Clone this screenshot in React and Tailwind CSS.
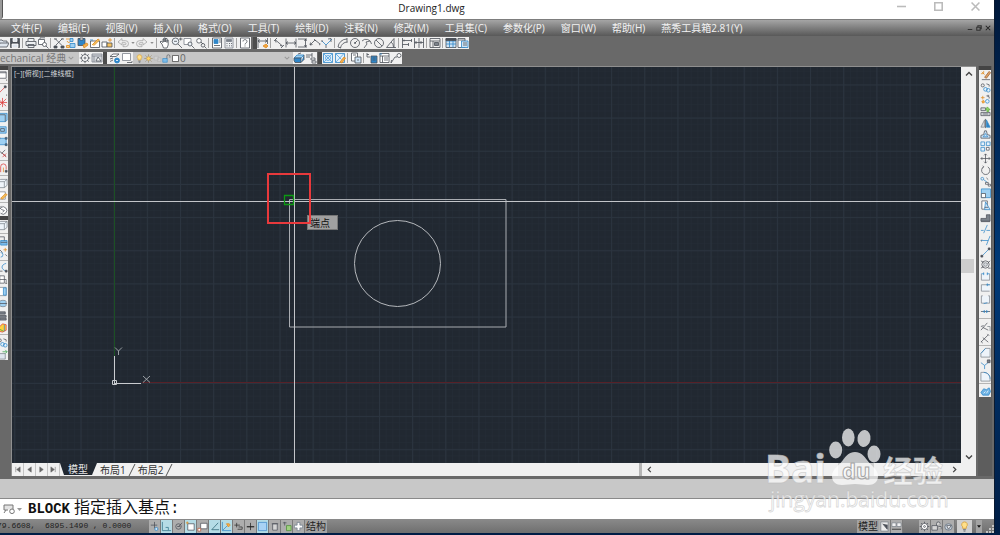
import React from "react";

const K = "#4b5058";
const B = "#2f86c8";
const L = "#9fd0f2";
const O = "#e08a1e";
const G = "#7c828a";
const R = "#dd3b3b";
const N = "none";

// Every icon is a list of [path, stroke, fill] drawn on a 12 x 12 grid.
const ICONS = {
  open: [["M1 10V3h4l1 1h4v2M1 10l2-4h9l-2 4z", K, "#dfe6ee"]],
  save: [["M1.500 1.500h9v9h-9z", K, K], ["M4 1.500h4v3H4zM3 7h6v3.500H3z", "#fff", "#dfe6ee"]],
  print: [["M3 4V1.500h6V4M1 4.500h10v4H1zM3 7.500h6v3H3z", K, "#eef0f2"]],
  preview: [["M1.500 4V2.500h6v5h-6zM3 2V.800h5", K, "#fff"], ["M7.500 5.500a2 2 0 1 1 0 4 2 2 0 0 1 0-4M9 9l2.500 2.500", K, "#fff"]],
  cut: [["M2 1.500l7 7M9.500 1.500l-7 7M1 2h3M8 2h3", K, N], ["M1 9h3v2H1zM8 9h3v2H8z", K, K]],
  copy: [["M1 2h4M2 4a2 2 0 0 0 3 1", O, N], ["M5 1.500h3v3H5zM5 6.500h5v4H5z", B, L], ["M1.500 8.500h3v2h-3z", O, "#f7d08a"]],
  paste: [["M1 1.500h7v7H1z", K, B], ["M3 1h3v2H3z", K, "#fff"], ["M6 8l4-2 1 2-4 3z", O, "#f3b04f"]],
  match: [["M1.500 4h9v6.500h-9z", K, "#fff"], ["M3 8l6-6 1.500 1L5 8.500", O, "#f3c05f"], ["M1 3h3", B, N]],
  block: [["M1 5h5v5H1z", K, "#fff"], ["M6 6h5v4H6z", K, "#f3c05f"], ["M7 3h4M9 1v4", O, N]],
  undo: [["M1 5l4-3.500v2.200h3.500a2.300 2.300 0 0 1 0 6H6v-2h2a.600.600 0 0 0 0-2H5V8z", "#a6a6a6", "#eee"]],
  redo: [["M11 5L7 1.500v2.200H3.500a2.300 2.300 0 0 0 0 6H6v-2H4a.600.600 0 0 1 0-2h3V8z", "#a6a6a6", "#eee"]],
  hand: [["M3 7L1 5l1-1 2 1.500V2h1v3V1h1.300v4V1.500H8v4V3h1.200v5L8 11H4.500z", K, "#fff"]],
  zoom: [["M4.500 1a3.300 3.300 0 1 1 0 6.600 3.300 3.300 0 0 1 0-6.600M7 7l4 4", K, "#eef4fa"], ["M3 4.300h3M8 2h3.500M9.700.500v3", K, N]],
  zoomWin: [["M1 1.500h7v6H1z", G, "#fff"], ["M7 5a2 2 0 1 1 0 4 2 2 0 0 1 0-4M8.500 8.500L11.500 11.500", K, "#eef4fa"]],
  zoomPrev: [["M4 1.500a2.300 2.300 0 1 1 0 4.600 2.300 2.300 0 0 1 0-4.600M6 5l2 2", K, "#fff"], ["M8 6.500a1.800 1.800 0 1 1 0 3.600 1.800 1.800 0 0 1 0-3.600M9.500 9.500l2 2", K, N]],
  props: [["M1.500 1h9v10h-9z", K, "#fff"], ["M3 2.500h4v4H3z", B, B], ["M8 3h2M8 5h2M3 8.500h6", K, N]],
  calc: [["M2 1h8v10H2z", G, "#eef0f2"], ["M3.500 2.500h5v2h-5z", G, G], ["M3.500 6.500h1M6 6.500h1M8 6.500h1M3.500 8.800h1M6 8.800h1M8 8.800h1", K, N]],
  help: [["M1.500 1h9v10h-9z", K, "#fff"], ["M4 4.500c0-2.500 4-2.500 4 0 0 1.500-2 1.500-2 3M6 8.500v1", K, N]],
  dimSmart: [["M1 1v10M10.500 1v6M1 4h9M3 2.500L1 4l2 1.500M8 2.500L10 4 8 5.500", K, N], ["M6 9l3-2 2 2-2 2z", O, "#f3a63f"]],
  dimAlign: [["M1 4l3-3M8 11l3-3M2.500 3l7 6M2.500 3l.5 2.500M9.500 9L7 8.500", K, N]],
  dimLin: [["M1 1.500v9M11 1.500v9M1 6h10M3 4.500L1 6l2 1.500M9 4.500L11 6 9 7.500", K, N]],
  dimBase: [["M1 2h9M1 10h9M8.500 2v8M7.500 4l1-2 1 2M7.500 8l1 2 1-2", K, N]],
  dimAng: [["M1 8l5-5 5 4M1 8l2.500-.5M1 8l.5-2.500", K, N], ["M5 2l2 2M10 8l1.500-1", K, N]],
  dimOrd: [["M1 4l4 4 6-6", B, N], ["M7 2l3-.5V5M5 8v3M1 3v2", K, N]],
  dimArc: [["M1 10a9 9 0 0 1 9-8M3.500 11a7 7 0 0 1 7-6M10 1v4.500M1 10l3 1", K, N]],
  dimRad: [["M6 1.500a4.500 4.500 0 1 1 0 9 4.500 4.500 0 0 1 0-9M6 6L8.500 3.500M6 5v2M5 6h2", K, N]],
  dimJog: [["M1 4a5.500 5.500 0 0 1 9.500 3M3 11l3-4-1-2 4-1", K, N]],
  dimDia: [["M6 1.500a4.500 4.500 0 1 1 0 9 4.500 4.500 0 0 1 0-9M3 3l6 6", K, N]],
  dimAngle: [["M9 1.500L1.500 10.500H11M6 5a6 6 0 0 1 2.500 5M9 1.500v9", K, N]],
  dimCont: [["M1.500 1v10M1.500 3.500h9M1.500 7.500h6M7.500 6v3M10.500 2v3M3 2.500v2", K, N]],
  dimQuick: [["M1.500 1v10M6 1v10M10.500 1v10M1.500 5.500h9M3 4v3M8 4v3", K, N]],
  tol: [["M1 1.500h10v9H1zM1 4h10M4 4v6.500", K, N], ["M5.500 5.500h4v3h-4z", K, G]],
  table: [["M1 1.500h10v9H1z", K, "#cfe4f6"], ["M1 4h10M1 7h10M4.500 1.500v9M8 1.500v9", B, N], ["M1 1.500h10v2H1z", K, K]],
  calcTab: [["M1 1.500h7v9H1z", K, "#fff"], ["M4.500 4h6.500v6.500H4.500z", B, "#cfe4f6"], ["M6 6h4M6 8h4M1 3h7", K, N]],
  gear: [["M6 2.500a3.500 3.500 0 1 1 0 7 3.500 3.500 0 0 1 0-7M6 .800v2M6 9.200v2M.800 6h2M9.200 6h2M2.300 2.300l1.500 1.500M8.200 8.200l1.500 1.500M9.700 2.300L8.200 3.800M3.800 8.200L2.300 9.700", K, "#fff"], ["M6 5a1 1 0 1 1 0 2 1 1 0 0 1 0-2", K, "#fff"]],
  space: [["M1 2h10v8H1zM1 4h10M3 4v6", G, "#d7dade"], ["M5 9l2-4 3 4z", K, "#fff"]],
  layers: [["M1 4.500L4 2h6L7 4.500zM1 7l3-1M1 9.500L4 8", K, "#fff"], ["M8 6a2.500 2.500 0 1 1 0 5 2.500 2.500 0 0 1 0-5", B, B], ["M7 8.500h2", "#fff", N]],
  layerState: [["M1.500 1.500h8v7h-8z", G, "#fff"], ["M6 10.500h5V9", K, N]],
  bulb: [["M6 1a3 3 0 0 1 2 5.300V8H4V6.300A3 3 0 0 1 6 1", "#d79a2b", "#ffe08a"], ["M4.500 9.500h3M5 11h2", K, N]],
  sun: [["M6 3.500a2.500 2.500 0 1 1 0 5 2.500 2.500 0 0 1 0-5", "#b58a3a", "#ffd66b"], ["M6 .500v2M6 9.500v2M.500 6h2M9.500 6h2M2 2l1.500 1.500M8.500 8.500L10 10M10 2L8.500 3.500M2 10l1.500-1.500", "#8b7a4c", N]],
  ghost: [["M1.500 3h6v5h-6zM6 5h4.500v5H6z", "#b4b4b4", "#cfcfcf"]],
  lock: [["M1 6h6v5H1z", B, "#7dbcea"], ["M6.500 6V3a2 2 0 0 1 4 0v2", K, N]],
  square: [["M2 2h8v8H2z", "#222", "#fff"]],
  layPrev: [["M1 6l3-3h7L8 6z", B, L], ["M1 8.500V6h7v4.500H2zM8 10.500l3-3V3", K, B], ["M5 2l3-1", K, N]],
  layIso: [["M1 3h6M1 5h4M7 1v4", K, N], ["M6 6h4v2H6zM7 9h4v2H7z", K, "#fff"]],
  grp: [["M1.500 1.500h9v9h-9z", B, "#e4f1fb"], ["M1.500 1.500l9 9M10.500 1.500l-9 9M6 3.500a2.500 2.500 0 1 1 0 5 2.500 2.500 0 0 1 0-5", "#4f9fdd", N]],
  grpEdit: [["M1.500 1.500h9v9h-9z", B, "#e4f1fb"], ["M1.500 1.500l6 6M10 1.500l-8.500 9", "#4f9fdd", N], ["M6 10l4-5 1.500 1-3.500 5z", O, "#f3b04f"]],
  insert: [["M1.500 1h6v8h-6z", K, "#fff"], ["M5 5h6v6H5z", K, "#cfe4f6"], ["M3 3h3M7 8h2", K, N]],
  attr: [["M5 4h6v7H5z", K, B], ["M1 1v4h3M1 2.500h2M6.500 6h3M6.500 8h3", K, N]],
  list: [["M2 1.500h9v9H2z", K, "#fff"], ["M2 4h9M4.500 4v6.500M6 6h4M6 8h4", K, N], ["M1 2h3", B, N]],
  leader: [["M1 11l4-6h2", K, N], ["M9 1.500a2 2 0 1 1 0 4 2 2 0 0 1 0-4", K, "#fff"], ["M1 11l.5-3", K, N]],
  erase: [["M2 2l3 3M1 4h3M4 1v3", O, N], ["M5 8l5-6.500L11.500 3 7 9z", "#9a5a2a", "#e0a468"], ["M2 10.500h9", K, N]],
  copyObj: [["M3 2a1.700 1.700 0 1 1 0 3.400A1.700 1.700 0 0 1 3 2M7 2l3 1v2", K, N], ["M6 6a2 2 0 1 1 0 4 2 2 0 0 1 0-4M9 7a2 2 0 1 1 0 4 2 2 0 0 1 0-4", B, "#e4f1fb"]],
  copyOr: [["M1 4h4M3 2v4", O, N], ["M7 2l3 1v2M8 1.500h2", K, N], ["M2 8l2-1 1 2-2 1z", O, "#f3b04f"], ["M8 6a2 2 0 1 1 0 4 2 2 0 0 1 0-4", B, "#e4f1fb"]],
  scaleList: [["M1 2h5v3H1zM1 7h10v3.500H1z", K, "#d7dade"], ["M8 1l3 3H9.500v2h-2V4H6z", "#58a838", "#8fd16b"], ["M3 8.700h6", K, N]],
  mirror: [["M5 2v8H1z", G, "#d7dade"], ["M7 2v8h4z", B, B], ["M6 1v10", K, N]],
  offset: [["M1 10V7l3-1 1-4h2l1 4 3 1v3z", K, "#cfe4f6"], ["M3.500 8.500h5L6 5z", B, N]],
  array: [["M1 1h4v4H1zM7 1h4v4H7zM1 7h4v4H1z", B, "#e4f1fb"], ["M7 7h3v3H7z", K, "#fff"]],
  move: [["M6 1v10M1 6h10M4.500 2.500L6 1l1.500 1.500M4.500 9.500L6 11l1.500-1.500M2.500 4.500L1 6l1.500 1.500M9.500 4.500L11 6 9.500 7.500", K, N]],
  rotate: [["M4 2a4.500 4.500 0 1 0 4.500 0M4 2L3 .800M4 2L2.500 3.500", K, N]],
  stretchObj: [["M2.500 1.500a1.500 1.500 0 1 1 0 3 1.500 1.500 0 0 1 0-3M4 4l4 3", B, N], ["M7 2l2 2M6 7h3v2H6zM9 9h2.500v2H9z", K, "#fff"]],
  scale: [["M1.500 1h10v9.500H1.500z", B, L], ["M1.500 6h4.500v4.500H1.500z", K, "#fff"]],
  stretch: [["M2 1h6v9H2z", K, "#fff"], ["M6 2l5 8.500H5z", B, "#cfe4f6"], ["M5 8h4", K, N]],
  lengthen: [["M1 7h6V3h4v7H1z", K, G], ["M1 10.500h10", K, N]],
  trim: [["M1 7h3M7 7h4", B, N], ["M4 10l4-9", B, N]],
  extend: [["M1 6h8", B, N], ["M7 11l4-10", B, N], ["M2 5l-1 1 1 1", K, N]],
  breakPt: [["M2 10l8-8", B, N], ["M1 9h2v2H1zM9 1h2v2H9z", K, K]],
  hatch: [["M6 2a4 4 0 1 1 0 8 4 4 0 0 1 0-8M1 2l3 2M11 2L8 5M1 10l3-2M9 10h2.500", K, N], ["M6 4a2 2 0 1 1 0 4 2 2 0 0 1 0-4", G, "#d7dade"]],
  brk: [["M1.500 3v7h9V3", G, "#eef4fa"], ["M1.500 3h3M7.500 3h3", B, N], ["M4 1.500v3M8 1.500v3", B, N]],
  brk2: [["M10.500 3h-9v7h9", G, "#eef4fa"], ["M7 3h4M8 1.500v3", B, N]],
  join: [["M3 2H1.500v8h9V2H9", G, "#eef4fa"], ["M4 10.500l4-1", B, N]],
  merge: [["M1 6h10", K, N], ["M5 4.500L3.500 6 5 7.500M7 4.500L8.500 6 7 7.500", B, B]],
  angA: [["M1 10l7-8M3 7l6 3M1 6l3-1", K, N], ["M8 6h3v5", G, N]],
  angB: [["M1 10l8-8M3 5l6 5M1 9l2 2M8 1l2 2", K, N]],
  chamfer: [["M1 11V7l5-5.500h5V11z", G, "#eef4fa"], ["M1 7l5-5.500", B, N]],
  ext2: [["M1 4l4 3M5 7l5-4M5 7v4", B, N], ["M8 1h3v3H8z", K, G]],
  fillet: [["M1 11V1.500h3c4 0 7 3 7 7V11z", G, "#eef4fa"], ["M4 1.500c4 0 7 3 7 7", B, N]],
  explode: [["M1 7l3-4 3 1 3-2 1.500 4-2 4H3z", B, "#6fb3e4"], ["M4 8l2-2M7 8l2-3", "#fff", N]],
  panel: [["M0 2h10v7H0z", K, "#fff"], ["M0 3h10", K, N], ["M10 11h1", "#111", N]],
  line: [["M2 9l7-7", R, N], ["M8 1h2v2H8z", K, K], ["M10 11h1", "#111", N]],
  star: [["M1 2l9 8M10 2L2 10M6 1v10M1 6h10", R, N]],
  sheet: [["M1 3l2-1.500h8V9L9 10.500H1z", B, L], ["M1 3h8v7.500", K, N]],
  sheet2: [["M1 3h9v7H1z", B, L], ["M4 5h4v3H4z", K, N]],
  frame: [["M2 2.500h8v7H2z", B, L], ["M1 1.500h2v2H1zM9 1.500h2v2H9zM9 8.500h2v2H9z", K, B]],
  node: [["M2 3l8 6", K, N], ["M6 6l4 4M10 6l-4 4", R, N], ["M9 2l-4 4", K, N]],
  arch: [["M4 10V4a3 3 0 0 1 6 0v3", R, N], ["M7 10V5", O, N], ["M9 8h2v2H9z", K, K]],
  cube: [["M1 4l3-2.500h7V8L8 10.500H1z", G, "#eef4fa"], ["M1 4h7v6.500M8 4l3-2.500", G, N]],
  pencil: [["M1 2h8v8H1z", G, "#fff"], ["M4 9l5-5 2 1-5 5z", O, "#f3c05f"]],
  spin: [["M4 3a4 4 0 1 1 0 6M5 5l3 1-2 2M5 1L3 3l2 2", K, "#fff"]],
  db: [["M4 6h7v5H4z", B, "#7dbcea"], ["M3 2h5v4M4 8h7", K, N]],
  spark: [["M4 6a2.500 2.500 0 1 1 0 5", B, N], ["M7 3h4M9 1v4", O, N], ["M3 3l3 3M9 8l2 2", K, N]],
  curve: [["M10 1.500C4 3 4 8 10 10", B, N], ["M2 2v8h4", K, N], ["M9 9h2v2H9z", K, K]],
  mesh: [["M3 2h5v8H3zM3 6h7v3", K, "#fff"], ["M9 10h2", "#111", N]],
  half: [["M2 1.500h8v9H2z", G, "#fff"], ["M7 2h3v8H7z", B, L]],
  drum: [["M3 4a3.500 1.500 0 1 1 7 0v4a3.500 1.500 0 1 1-7 0z", G, L], ["M2 6h9", K, N]],
  stack: [["M2 2h7v2.500H2zM2 6h8v2H2zM3 9h7v2H3z", K, G]],
  color: [["M2 6l4-4 4 1v6l-4 2-4-1z", R, "#ffd13b"], ["M8 3v7", B, N], ["M3 8l4 2", "#37a34a", N]],
  green: [["M2 5h7v6H2z", G, "#dfe6ee"], ["M6 3h5M9 1l2 2-2 2", "#37a34a", N]],
  snapInfer: [["M6 1v7M2 4.500h7", K, N], ["M8 7a1.700 1.700 0 1 1 0 3.400A1.700 1.700 0 0 1 8 7", B, "#cfe4f6"]],
  corner: [["M1.500 1v9.500H11", "#2d7186", N], ["M5 7h3v3", "#2d7186", N]],
  polar: [["M6 3a3 3 0 1 1 0 6 3 3 0 0 1 0-6M6 6l4-4M4.500 6H8", K, N]],
  osnap: [["M3 3h7v7H3z", K, "#fff"], ["M1 2h3M2.500.500v3", O, N]],
  osnap3: [["M4 2.500h7v6H4z", K, "#fff"], ["M1 8h3v3H1z", "#b5563a", "#fff"]],
  otrack: [["M10 2L3 9.500h8", "#26606f", N]],
  ducs: [["M1.500 1v9.500H11M2 10l5-5", B, N], ["M6 3h3l1 1.500-2 2z", O, "#f3b04f"]],
  dyn: [["M4 2v5M1.500 4.500h6M5 9h5V6.500H6", "#2c2c2c", N]],
  lwt: [["M6 2v8M2 6h8", "#222", N], ["M2 6.500h8", "#222", N]],
  tpy: [["M1.500 1.500h9v9h-9z", "#3f86c8", "#a8d2f4"]],
  qp: [["M4 3h5v7H4zM3 3h7", K, "#d5d5d5"]],
  sc: [["M2 2h4M4 1v4", K, N], ["M6 5h5v5.500H6z", "#4b8c36", "#9fd17f"]],
  plus: [["M4.500 1.500h3v3h3v3h-3v3h-3v-3h-3v-3h3z", "#6f7b8a", "#fff"]],
  paper: [["M2 1h8v10H2z", G, "#ececec"], ["M4 3l5 6V4", K, K]],
  views: [["M1 2h4.500v4H1zM6.500 2H11v4H6.500z", G, "#f2f2f2"], ["M1 9h10", "#222", N]],
  tray: [["M1 5h6v5H1zM6 5V3a2 2 0 0 1 4 0M8 6h3v3", K, "#d5d5d5"]],
  disc: [["M6 3a4 3.500 0 1 1 0 7 4 3.500 0 0 1 0-7", "#5f6b78", "#c7d0da"], ["M4 5h5L6 9z", "#4b5058", "#eef0f2"]],
};

function Icon({ n, cls = "size-3" }) {
  return (
    <svg viewBox="0 0 12 12" className={`${cls} shrink-0`} aria-hidden="true">
      {ICONS[n].map(([d, s, f], i) => (
        <path key={i} d={d} stroke={s} fill={f} strokeWidth=".8" />
      ))}
    </svg>
  );
}

function Tool({ n }) {
  return (
    <button type="button" aria-label={n} className="flex h-full w-3 shrink-0 items-center justify-center">
      <Icon n={n} />
    </button>
  );
}

const Sep = () => <span className="mr-[2px] ml-px h-[10px] w-px shrink-0 self-center bg-[#a3a3a3]" />;
const Handle = () => <span className="h-full w-1 shrink-0 bg-[#4d4d4d]" />;
const More = () => (
  <button type="button" aria-label="more" className="flex w-[7px] shrink-0 items-center justify-center">
    <svg viewBox="0 0 5 3" className="h-[2px] w-1"><path d="M0 0h5L2.500 3z" fill="#8d8d8d" /></svg>
  </button>
);

function Tools({ list }) {
  return list.split(" ").map((n, i) => {
    if (n === "|") return <Sep key={i} />;
    if (n === "v") return <More key={i} />;
    return <Tool key={i} n={n} />;
  });
}

function Column({ list, cls }) {
  return (
    <div className={`flex flex-col items-end bg-[#f0f0f0] ${cls}`}>
      {list.split(" ").map((n, i) =>
        n === "|" ? (
          <span key={i} className="my-px h-px w-full shrink-0 bg-[#b5b5b5]" />
        ) : (
          <button key={i} type="button" aria-label={n} className="flex min-h-0 w-3 flex-1 items-center justify-center">
            <Icon n={n} cls="size-[11px]" />
          </button>
        )
      )}
    </div>
  );
}

function Chevron({ d, cls = "size-2", stroke = "#444" }) {
  return (
    <svg viewBox="0 0 8 8" className={`${cls} shrink-0`} aria-hidden="true">
      <path d={d} fill="none" stroke={stroke} strokeWidth="1.400" />
    </svg>
  );
}

const MENUS = ["文件(F)", "编辑(E)", "视图(V)", "插入(I)", "格式(O)", "工具(T)", "绘制(D)", "注释(N)", "修改(M)", "工具集(C)", "参数化(P)", "窗口(W)", "帮助(H)", "燕秀工具箱2.81(Y)"];

function Drawing() {
  return (
    <svg className="absolute inset-0 h-full w-full" aria-label="drawing">
      <defs>
        <pattern id="minor" x="2.300" y="17" width="6.632" height="6.632" patternUnits="userSpaceOnUse">
          <path d="M0 0H6.632M0 0V6.632" stroke="#252d37" strokeWidth="1" />
        </pattern>
        <pattern id="major" x="2.200" y="17.500" width="33.160" height="33.160" patternUnits="userSpaceOnUse">
          <path d="M.5 0V33.160M0 .5H33.160" stroke="#2b343f" strokeWidth="1" />
        </pattern>
      </defs>
      <rect width="100%" height="100%" fill="url(#minor)" />
      <rect width="100%" height="100%" fill="url(#major)" />
      <g fill="none" transform="translate(-12 -67)">
        <path d="M114.500 60V356" stroke="#1c5024" />
        <path d="M142 382.500H3000" stroke="#572128" />
        <path d="M114.500 356V383M114 383.500H141" stroke="#c9ccd0" />
        <path d="M112.500 380.500h4v4h-4z" stroke="#c9ccd0" />
        <path d="M143 376l7 6.500M150 376l-7 6.500M115 347.500l3.500 3.500 3.500-3.500M118.500 351v4" stroke="#a7abb0" strokeWidth=".9" />
        <path d="M289.500 199.500H506V327H289.500z" stroke="#a9acb1" />
        <circle cx="397.500" cy="263.500" r="43" stroke="#b4b7bb" />
        <path d="M294.500 0V3000M0 201.500H3000" stroke="#c3c5c9" />
        <path d="M284.500 195.500h9v9h-9z" stroke="#0c9a12" strokeWidth="1.300" />
      </g>
    </svg>
  );
}

function Watermark() {
  return (
    <svg viewBox="0 0 190 90" className="pointer-events-none absolute right-[43px] bottom-[18px] h-[90px] w-[190px]">
      <g fill="#fff" fillOpacity=".72">
        <ellipse cx="74.700" cy="25" rx="6.500" ry="8.500" />
        <ellipse cx="87.300" cy="12.500" rx="6.300" ry="9" />
        <ellipse cx="103" cy="13.500" rx="6.500" ry="8.500" transform="rotate(8 103 13.500)" />
        <ellipse cx="113" cy="29" rx="6.500" ry="8.500" />
        <path d="M94 27c6 0 9 4 12 8 4 6 11 9 11 16 0 6-4 9-10 9-5 0-8-1-13-1s-8 1-13 1c-6 0-10-3-10-9 0-7 7-10 11-16 3-4 6-8 12-8z" />
      </g>
      <g fill="#fff" fillOpacity=".72" stroke="#bdbdbd" strokeOpacity=".6" strokeWidth=".8">
        <text x="4" y="58" fontFamily="Noto Sans, sans-serif" fontWeight="700" fontSize="39">Bai</text>
        <text x="122" y="57" fontFamily="Noto Sans CJK SC, sans-serif" fontWeight="700" fontSize="30">经验</text>
        <text x="9" y="82" fontFamily="Open Sans, sans-serif" fontSize="21">jingyan.baidu.com</text>
      </g>
      <text x="81" y="54" fontFamily="Noto Sans, sans-serif" fontWeight="700" fontSize="22" fill="#fff" fillOpacity=".6" stroke="#a4a4a4" strokeWidth="1">du</text>
    </svg>
  );
}

const STATUS = [["snapInfer", 0], ["corner", 1], ["polar", 0], ["osnap", 1], ["osnap3", 0], ["otrack", 1], ["ducs", 1], ["dyn", 0], ["lwt", 0], ["tpy", 1], ["qp", 0], ["sc", 0], ["plus", 0]];

function StatusButton({ n, on }) {
  return (
    <button type="button" aria-label={n} aria-pressed={!!on} className={`flex h-[13px] w-3 shrink-0 items-center justify-center border-r border-[#7b7b7b] ${on ? "bg-[#b5dce6]" : "bg-[#adadad]"}`}>
      <Icon n={n} cls="size-[11px]" />
    </button>
  );
}

function Tab({ children }) {
  return (
    <>
      <button type="button" className="text-[10px] leading-3 text-[#333]">{children}</button>
      <svg viewBox="0 0 8 12" className="mx-[2px] h-3 w-2 shrink-0"><path d="M1 12L7 0" stroke="#555" fill="none" /></svg>
    </>
  );
}

export default function App() {
  return (
    <div className="flex h-screen w-full bg-linear-to-b from-[#00183a] via-[#003a78] to-[#001d45] pb-[2px] font-['Open_Sans','Noto_Sans_CJK_SC',sans-serif]">
      <div className="relative flex min-w-0 flex-1 flex-col overflow-hidden bg-[#696969]">
        <header className="flex h-[19px] shrink-0 items-center bg-white">
          <span className="w-[3px] shrink-0 self-stretch rounded-br-sm border-r border-[#555] bg-[#9a9a9a]" />
          <h1 className="flex-1 pr-[134px] pb-[3px] text-center text-[10px] leading-4 text-[#222]">Drawing1.dwg</h1>
          <div className="absolute top-0 right-[14px] flex h-[13px] items-center gap-[28px]">
            <button type="button" aria-label="minimize"><Chevron d="M0 4H8" cls="size-[9px]" stroke="#bbb" /></button>
            <button type="button" aria-label="maximize"><Chevron d="M.7.700h6.600v6.600H.7z" cls="size-[9px]" stroke="#bbb" /></button>
            <button type="button" aria-label="close"><Chevron d="M.5.500l7 7M7.500.500l-7 7" cls="size-[9px]" stroke="#bbb" /></button>
          </div>
        </header>

        <nav className="flex h-[17px] shrink-0 items-center border-t border-[#7d7d7d] bg-linear-to-b from-[#a5a5a5] to-[#595959] pl-[11px]">
          <div className="flex flex-1 gap-4">
            {MENUS.map((m) => (
              <button key={m} type="button" className="text-[10px] leading-4 whitespace-nowrap text-[#f2f2f2]">{m}</button>
            ))}
          </div>
          <div className="flex items-center gap-[3px] pr-[3px]">
            <Chevron d="M1 6H7" cls="size-[6px]" stroke="#333" />
            <Chevron d="M2.500 2.500V1H7v4H5.500M1 3h4.500v4H1z" cls="size-[6px]" stroke="#333" />
            <Chevron d="M1 1l6 6M7 1L1 7" cls="size-[6px]" stroke="#222" />
          </div>
        </nav>

        <div className="flex h-[14px] shrink-0 items-center py-px">
          <div className="-ml-[3px] flex h-3 bg-[#f0f0f0]">
            <Tools list="open save | print preview | cut copy paste match block | undo v redo v | hand zoom zoomWin zoomPrev | props calc | help" />
          </div>
          <div className="ml-[2px] flex h-3 bg-[#f0f0f0]">
            <Handle />
            <Tools list="dimSmart | dimAlign dimLin dimBase dimAng dimOrd | dimArc dimRad dimJog dimDia dimAngle | dimCont dimQuick | tol | table calcTab" />
          </div>
        </div>

        <div className="flex h-[15px] shrink-0 items-center pt-px">
          <div className="flex h-3 w-[103px] items-center overflow-hidden bg-[#f0f0f0]">
            <div className="flex h-full w-[79px] items-center overflow-hidden bg-[#c6c6c6]">
              <select aria-label="workspace" className="-ml-[9px] w-[77px] appearance-none text-[10px] leading-3 text-[#777]"><option>Mechanical 经典</option></select>
              <Chevron d="M1 2.500l3 3 3-3" cls="size-[6px]" stroke="#999" />
            </div>
            <Tools list="gear space" />
          </div>
          <div className="flex h-3 items-center bg-[#f0f0f0]">
            <Handle />
            <span className="w-[2px]" />
            <Tools list="layers layerState" />
            <div className="flex h-full w-[160px] items-center bg-[#c6c6c6] pl-[2px]">
              {["bulb", "sun", "ghost", "lock", "square"].map((n) => <Icon key={n} n={n} cls="size-[9px]" />)}
              <select aria-label="layer" className="min-w-0 flex-1 appearance-none text-[10px] leading-3 text-[#666]"><option>0</option></select>
              <Chevron d="M1 2.500l3 3 3-3" cls="mr-[3px] size-[6px]" stroke="#999" />
            </div>
            <Tools list="layPrev layIso" />
          </div>
          <div className="ml-px flex h-3 items-center bg-[#f0f0f0]">
            <Handle />
            <Tools list="grp grpEdit | insert | attr list leader" />
          </div>
        </div>

        <main className="mt-px flex min-h-0 flex-1">
          <aside className="flex w-2 shrink-0 flex-col overflow-hidden">
            <span className="h-1 shrink-0 bg-[#444]" />
            <Column cls="h-[146px]" list="panel | line star | sheet sheet2 frame node | arch | cube pencil | spin" />
            <span className="h-1 shrink-0 bg-[#444]" />
            <Column cls="h-[140px]" list="cube | db spark | curve mesh half drum stack color | copyObj green" />
          </aside>

          <section className="ml-[3px] flex min-w-0 flex-1 flex-col border-t border-l border-[#8f8f8f]">
            <div className="flex min-h-0 flex-1">
              <div className="relative min-w-0 flex-1 overflow-hidden bg-[#212831]">
                <Drawing />
                <p className="relative px-[2px] pt-[2px] text-[7px] leading-[10px] text-[#d5d8db]">[−][俯视][二维线框]</p>
                <div className="absolute top-[148px] left-[295px] flex h-[15px] w-[31px] items-center border border-[#777] bg-[#a0a0a0] pl-[2px] text-[10px] leading-3 text-[#111]">端点</div>
                <div className="absolute top-[106px] left-[255px] h-[51px] w-[44px] border-2 border-[#e8393c]" />
              </div>
              <div className="flex w-[15px] shrink-0 flex-col items-center bg-[#f0f0f0] pt-[3px] pb-[2px]">
                <Chevron d="M1 5.500l3-3 3 3" />
                <span className="flex-1" />
                <span className="h-[14px] w-[13px] self-start bg-[#cdcdcd]" />
                <span className="flex-1" />
                <Chevron d="M1 2.500l3 3 3-3" />
              </div>
            </div>
            <div className="flex h-[13px] shrink-0 items-center bg-[#f0f0f0]">
              {["M2 1v6M7 1L3 4l4 3z", "M6 1L2 4l4 3z", "M2 1l4 3-4 3z", "M6 1v6M1 1l4 3-4 3z"].map((d) => (
                <button key={d} type="button" aria-label="tab scroll" className="flex h-full w-3 shrink-0 items-center justify-center border-r border-[#c4c4c4]">
                  <svg viewBox="0 0 8 8" className="size-[7px]"><path d={d} fill="#666" stroke="#666" strokeWidth=".6" /></svg>
                </button>
              ))}
              <svg viewBox="0 0 8 12" className="h-3 w-2 shrink-0 self-start"><path d="M0 0h8v12H4z" fill="#212831" /></svg>
              <button type="button" className="h-3 self-start bg-[#212831] text-[10px] leading-3 text-[#e5e5e5]">模型</button>
              <svg viewBox="0 0 10 12" className="mr-[2px] h-3 w-[10px] shrink-0 self-start"><path d="M0 0h9L4 12H0z" fill="#212831" /></svg>
              <Tab>布局1</Tab>
              <Tab>布局2</Tab>
              <span className="flex-1" />
              <div className="flex h-full w-[35%] items-center">
                <span className="h-full w-[3px] bg-[#b5b5b5]" />
                <button type="button" aria-label="scroll left" className="ml-1"><Chevron d="M5.500 1l-3 3 3 3" cls="size-[7px]" /></button>
                <span className="flex-1" />
                <span className="mr-[77px] h-full w-9 bg-[#cdcdcd]" />
                <button type="button" aria-label="scroll right" className="mr-[18px]"><Chevron d="M2.500 1l3 3-3 3" cls="size-[7px]" /></button>
              </div>
            </div>
          </section>

          <aside className="mr-[2px] ml-[2px] w-[14px] shrink-0 bg-[#5d5d5d] px-px">
            <span className="block h-1 bg-[#444]" />
            <Column cls="h-[327px]" list="erase copyObj copyOr scaleList mirror offset array move rotate stretchObj scale stretch lengthen trim extend breakPt hatch brk brk2 join merge | angA angB | chamfer ext2 fillet | explode" />
          </aside>
        </main>

        <div className="mt-[3px] h-5 shrink-0 border-b border-[#8a8a8a] bg-[#c8c8c8]" />
        <div className="flex h-5 shrink-0 items-center bg-white pl-[3px]">
          <svg viewBox="0 0 14 12" className="h-3 w-[14px] shrink-0"><path d="M1 7V2h9v4M1 7h4M3 7l-2 3" stroke="#777" fill="#e3e3e3" /><path d="M9 6a2.300 2.300 0 1 1 0 4.600A2.300 2.300 0 0 1 9 6" stroke="#777" fill="#fff" /></svg>
          <svg viewBox="0 0 5 3" className="h-[3px] w-[5px] shrink-0"><path d="M0 0h5L2.500 3z" fill="#999" /></svg>
          <label htmlFor="cmd" className="ml-[6px] flex items-center gap-1 font-['Liberation_Mono','Noto_Sans_CJK_SC',monospace] leading-5 whitespace-nowrap text-[#111]">
            <b className="text-[14px]">BLOCK</b>
            <span className="text-[16px]">指定插入基点:</span>
          </label>
          <input id="cmd" type="text" className="min-w-0 flex-1 bg-transparent text-[14px] outline-none" />
        </div>

        <footer className="flex h-[14px] shrink-0 items-center bg-linear-to-b from-[#8a8a8a] to-[#6f6f6f] text-[#222]">
          <output className="-ml-[3px] w-[152px] shrink-0 font-['Liberation_Mono',monospace] text-[8px] leading-3 whitespace-pre">79.6608,  6895.1490 , 0.0000</output>
          {STATUS.map(([n, on]) => <StatusButton key={n} n={n} on={on} />)}
          <button type="button" className="h-[13px] bg-[#a3a3a3] px-px text-[10px] leading-[13px]">结构</button>
          <span className="flex-1" />
          <button type="button" className="h-[13px] bg-[#a3a3a3] px-px text-[10px] leading-[13px]">模型</button>
          <StatusButton n="paper" />
          <StatusButton n="views" />
          <span className="w-4" />
          <StatusButton n="gear" />
          <StatusButton n="tray" />
          <StatusButton n="disc" />
          <span className="w-[2px]" />
          <button type="button" aria-label="isolate" className="flex h-[13px] w-[15px] items-center justify-center bg-[#cfcfcf]"><Icon n="bulb" cls="size-[11px]" /></button>
          <button type="button" aria-label="status menu" className="ml-1 flex h-[13px] w-[6px] items-center justify-center bg-[#a3a3a3]"><svg viewBox="0 0 5 3" className="h-[3px] w-1"><path d="M0 0h5L2.500 3z" fill="#111" /></svg></button>
          <svg viewBox="0 0 8 8" className="ml-1 size-2 self-end"><path d="M6 0h2v2H6zM3 3h2v2H3zM6 3h2v2H6zM0 6h2v2H0zM3 6h2v2H3zM6 6h2v2H6z" fill="#c4c4c4" /></svg>
        </footer>
        <Watermark />
      </div>
      <div className="w-[6px] shrink-0 border-l border-[#0a1a30]" />
    </div>
  );
}
